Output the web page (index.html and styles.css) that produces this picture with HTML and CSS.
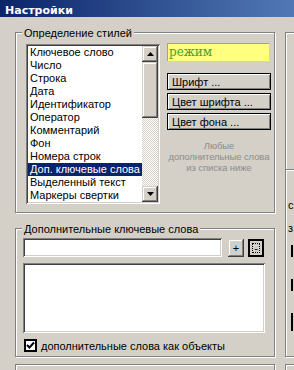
FILE: index.html
```html
<!DOCTYPE html>
<html lang="ru">
<head>
  <meta charset="UTF-8">
  <title>Настройки</title>
  <link rel="stylesheet" href="styles.css">
</head>
<body>
  <div class="titlebar">Настройки</div>

  <div class="dialog">
    <div class="col-left">
      <div class="group styles-group">
        <span class="legend">Определение стилей</span>
        <div class="listbox">
          <ul class="items">
            <li>Ключевое слово</li>
            <li>Число</li>
            <li>Строка</li>
            <li>Дата</li>
            <li>Идентификатор</li>
            <li>Оператор</li>
            <li>Комментарий</li>
            <li>Фон</li>
            <li>Номера строк</li>
            <li class="selected">Доп. ключевые слова</li>
            <li>Выделенный текст</li>
            <li>Маркеры свертки</li>
          </ul>
          <div class="scrollbar">
            <div class="sb-btn">
              <svg width="7" height="4" viewBox="0 0 7 4"><path d="M3.5 0L7 4H0z" fill="#000"/></svg>
            </div>
            <div class="sb-thumb"></div>
            <div class="sb-track"></div>
            <div class="sb-btn">
              <svg width="7" height="4" viewBox="0 0 7 4"><path d="M0 0h7L3.5 4z" fill="#000"/></svg>
            </div>
          </div>
        </div>

        <div class="style-side">
          <div class="preview">режим</div>
          <button class="btn">Шрифт ...</button>
          <button class="btn">Цвет шрифта ...</button>
          <button class="btn">Цвет фона ...</button>
          <p class="hint">Любые<br>дополнительные слова<br>из списка ниже</p>
        </div>
      </div>

      <div class="group words-group">
        <span class="legend">Дополнительные ключевые слова</span>
        <div class="word-row">
          <div class="field word-input"></div>
          <button class="sq-btn">+</button>
          <button class="sq-btn focused"><span>-</span></button>
        </div>
        <div class="field word-list"></div>
        <label class="check-row">
          <span class="checkbox">
            <svg width="9" height="9" viewBox="0 0 9 9"><path d="M1 4l2.5 2.5L8 1.5" fill="none" stroke="#000" stroke-width="2"/></svg>
          </span>
          дополнительные слова как объекты
        </label>
      </div>

      <div class="group stub"></div>
    </div>

    <div class="col-right">
      <div class="group side-panel">
        <div class="side-top"></div>
        <div class="side-rest">
          <div class="frag-text">с</div>
          <div class="frag-text">з</div>
          <div class="frag-box"></div>
          <div class="frag-box"></div>
          <div class="frag-box tall"></div>
        </div>
      </div>
      <div class="group stub"></div>
    </div>
  </div>
</body>
</html>
```

FILE: styles.css
```css
* {
  box-sizing: border-box;
}
body {
  margin: 0;
  width: 294px;
  height: 370px;
  overflow: hidden;
  background: #d4d0c8;
  font: 11px "Liberation Sans", Arial, sans-serif;
  color: #000;
}

.titlebar {
  height: 17px;
  padding: 4px 0 0 5px;
  line-height: 13px;
  background: linear-gradient(90deg, #0a246a, #5279b5);
  color: #fff;
  font: bold 11px "DejaVu Sans", sans-serif;
}

.dialog {
  display: flex;
  gap: 10px;
  padding: 15px 0 0 15px;
}
.col-left {
  width: 260px;
  flex: none;
}
.col-right {
  width: 100px;
  flex: none;
}

/* etched group frame */
.group {
  position: relative;
  border: 1px solid #808080;
  box-shadow: inset 1px 1px #fff, 1px 1px #fff;
}
.legend {
  position: absolute;
  top: -7px;
  left: 6px;
  padding: 0 2px;
  line-height: 14px;
  background: #d4d0c8;
  white-space: nowrap;
}

/* bevels */
.field {
  background: #fff;
  box-shadow: inset 1px 1px #808080, inset -1px -1px #fff,
              inset 2px 2px #404040, inset -2px -2px #d4d0c8;
}
.sb-btn, .sb-thumb, .sq-btn {
  background: #d4d0c8;
  box-shadow: inset -1px -1px #404040, inset 1px 1px #d4d0c8,
              inset -2px -2px #808080, inset 2px 2px #fff;
}

/* styles group */
.styles-group {
  height: 181px;
  display: flex;
  gap: 7px;
  padding: 11px 0 0 10px;
}
.listbox {
  width: 134px;
  height: 160px;
  display: flex;
  padding: 2px;
  background: #fff;
  box-shadow: inset 1px 1px #808080, inset -1px -1px #fff,
              inset 2px 2px #404040, inset -2px -2px #d4d0c8;
}
.items {
  flex: 1;
  margin: 0;
  padding: 0;
  list-style: none;
  overflow: hidden;
}
.items li {
  height: 13px;
  line-height: 13px;
  padding-left: 2px;
  white-space: nowrap;
}
.items li.selected {
  background: #0a246a;
  color: #fff;
}
.scrollbar {
  width: 16px;
  display: flex;
  flex-direction: column;
}
.sb-btn {
  height: 16px;
  display: flex;
  align-items: center;
  justify-content: center;
}
.sb-thumb {
  height: 56px;
}
.sb-track {
  flex: 1;
  background: repeating-conic-gradient(#fff 0 25%, #d4d0c8 0 50%) 0 0 / 2px 2px;
}

.style-side {
  width: 104px;
  margin-top: -1px;
  display: flex;
  flex-direction: column;
  gap: 3px;
}
.preview {
  width: 102px;
  height: 18px;
  margin-bottom: 9px;
  padding-left: 2px;
  background: #ffff80;
  box-shadow: inset 1px 1px #a0a0a0;
  color: #4a9e32;
  font: 12px/18px "DejaVu Serif", serif;
}
.btn {
  height: 17px;
  width: 104px;
  padding: 0 0 0 4px;
  border: 1px solid #000;
  background: #d4d0c8;
  box-shadow: inset 1px 1px #fff, inset -1px -1px #808080;
  font: inherit;
  text-align: left;
  color: #000;
}
.hint {
  margin: 7px -2px 0;
  font-size: 9.5px;
  line-height: 11px;
  letter-spacing: -0.1px;
  white-space: nowrap;
  color: #8c8c8c;
  text-align: center;
}

/* extra words group */
.words-group {
  margin-top: 15px;
  height: 129px;
  padding: 9px 0 0 7px;
}
.word-row {
  display: flex;
  align-items: flex-end;
}
.word-input {
  width: 199px;
  height: 19px;
}
.sq-btn {
  width: 16px;
  height: 18px;
  margin-left: 6px;
  padding: 0;
  border: none;
  font: inherit;
  color: #000;
}
.sq-btn.focused {
  margin-left: 4px;
  display: flex;
  padding: 2px;
  border: 2px solid #000;
  box-shadow: none;
}
.sq-btn.focused span {
  flex: 1;
  border: 1px dotted #000;
  line-height: 8px;
}
.word-list {
  width: 242px;
  height: 70px;
  margin-top: 6px;
}
.check-row {
  margin-top: 6px;
  padding-left: 1px;
  height: 13px;
  display: flex;
  align-items: center;
  gap: 4px;
  white-space: nowrap;
}
.checkbox {
  width: 13px;
  height: 13px;
  flex: none;
  display: flex;
  align-items: center;
  justify-content: center;
  border: 2px solid #000;
  background: #fff;
}

.stub {
  margin-top: 7px;
  height: 20px;
}

/* right panel, mostly cut off */
.side-panel {
  height: 325px;
}
.side-top {
  height: 137px;
  border-bottom: 1px solid #808080;
  box-shadow: 0 1px #fff;
}
.side-rest {
  padding: 29px 0 0 2px;
  display: flex;
  flex-direction: column;
}
.frag-text {
  height: 13px;
  line-height: 13px;
  margin-bottom: 10px;
  color: #000;
}
.frag-box {
  width: 60px;
  height: 12px;
  margin: 0 0 22px 3px;
  border-left: 2px solid #000;
}
.frag-box.tall {
  height: 18px;
}
```
